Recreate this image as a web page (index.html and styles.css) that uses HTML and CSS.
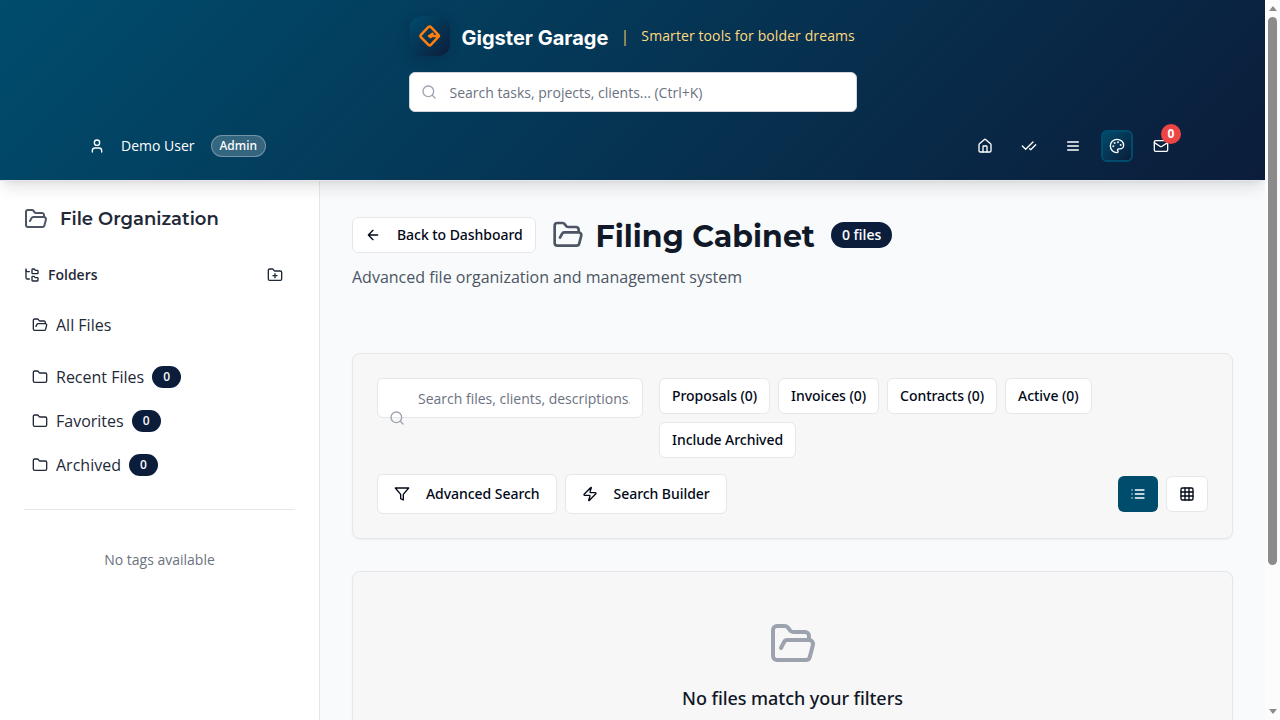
FILE: index.html
```html
<!DOCTYPE html>
<html lang="en">
<head>
<meta charset="utf-8">
<title>Filing Cabinet</title>
<link rel="stylesheet" href="styles.css">
</head>
<body>
<svg width="0" height="0" class="defs">
  <symbol id="folder-open" viewBox="0 0 24 24"><path d="m6 14 1.5-2.9A2 2 0 0 1 9.24 10H20a2 2 0 0 1 1.94 2.5l-1.54 6a2 2 0 0 1-1.95 1.5H4a2 2 0 0 1-2-2V5a2 2 0 0 1 2-2h3.9a2 2 0 0 1 1.69.9l.81 1.2a2 2 0 0 0 1.67.9H18a2 2 0 0 1 2 2v2"/></symbol>
  <symbol id="folder" viewBox="0 0 24 24"><path d="M20 20a2 2 0 0 0 2-2V8a2 2 0 0 0-2-2h-7.9a2 2 0 0 1-1.69-.9L9.6 3.9A2 2 0 0 0 7.93 3H4a2 2 0 0 0-2 2v13a2 2 0 0 0 2 2Z"/></symbol>
  <symbol id="search" viewBox="0 0 24 24"><circle cx="11" cy="11" r="8"/><path d="m21 21-4.3-4.3"/></symbol>
</svg>
<div class="viewport">
<div class="page">
  <header class="header">
    <div class="brand">
      <div class="logo"><svg width="24" height="24" viewBox="0 0 24 24"><path d="M10.5 2.9 2.9 10.8a1.6 1.6 0 0 0 0 2.3l7.6 7.8a1.6 1.6 0 0 0 2.3 0l8-8.5a.7.7 0 0 0 0-1l-8-8.5a1.6 1.6 0 0 0-2.3 0ZM20 12H11M14.5 9.8 11.5 12l1.2 1.2"/></svg></div>
      <span class="brand-name">Gigster Garage</span>
      <span class="brand-bar">|</span>
      <span class="tagline">Smarter tools for bolder dreams</span>
    </div>
    <div class="global-search"><svg class="icon"><use href="#search"/></svg><span>Search tasks, projects, clients... (Ctrl+K)</span></div>
    <div class="header-row">
      <div class="user">
        <svg class="icon" viewBox="0 0 24 24"><path d="M19 21v-2a4 4 0 0 0-4-4H9a4 4 0 0 0-4 4v2"/><circle cx="12" cy="7" r="4"/></svg>
        <span>Demo User</span><span class="admin">Admin</span>
      </div>
      <nav class="nav">
        <span class="nav-item"><svg class="icon" viewBox="0 0 24 24"><path d="M15 21v-8a1 1 0 0 0-1-1h-4a1 1 0 0 0-1 1v8"/><path d="M3 10a2 2 0 0 1 .709-1.528l7-5.999a2 2 0 0 1 2.582 0l7 5.999A2 2 0 0 1 21 10v9a2 2 0 0 1-2 2H5a2 2 0 0 1-2-2z"/></svg></span>
        <span class="nav-item"><svg class="icon" viewBox="0 0 24 24"><path d="M18 6 7 17l-5-5"/><path d="m22 10-7.5 7.5L13 16"/></svg></span>
        <span class="nav-item"><svg class="icon" viewBox="0 0 24 24"><path d="M4 12h16M4 6h16M4 18h16"/></svg></span>
        <span class="nav-item nav-active"><svg class="icon" viewBox="0 0 24 24"><g fill="currentColor"><circle cx="13.5" cy="6.5" r=".5"/><circle cx="17.5" cy="10.5" r=".5"/><circle cx="8.5" cy="7.5" r=".5"/><circle cx="6.5" cy="12.5" r=".5"/></g><path d="M12 2C6.5 2 2 6.5 2 12s4.5 10 10 10c.926 0 1.648-.746 1.648-1.688 0-.437-.18-.835-.437-1.125-.29-.289-.438-.652-.438-1.125a1.64 1.64 0 0 1 1.668-1.668h1.996c3.051 0 5.555-2.503 5.555-5.554C21.965 6.012 17.461 2 12 2z"/></svg></span>
        <span class="nav-item"><svg class="icon" viewBox="0 0 24 24"><rect x="2" y="4" width="20" height="16" rx="2"/><path d="m22 7-8.97 5.7a1.94 1.94 0 0 1-2.06 0L2 7"/></svg><b class="count">0</b></span>
      </nav>
    </div>
  </header>
  <div class="body">
    <aside class="sidebar">
      <h2 class="side-title"><svg class="icon"><use href="#folder-open"/></svg>File Organization</h2>
      <div class="folders-head">
        <svg class="icon" viewBox="0 0 24 24"><path d="M20 10a1 1 0 0 0 1-1V6a1 1 0 0 0-1-1h-2.5a1 1 0 0 1-.8-.4l-.9-1.2A1 1 0 0 0 15 3h-2a1 1 0 0 0-1 1v5a1 1 0 0 0 1 1Z"/><path d="M20 21a1 1 0 0 0 1-1v-3a1 1 0 0 0-1-1h-2.9a1 1 0 0 1-.88-.55l-.42-.85a1 1 0 0 0-.92-.6H13a1 1 0 0 0-1 1v5a1 1 0 0 0 1 1Z"/><path d="M3 5a2 2 0 0 0 2 2h3"/><path d="M3 3v13a2 2 0 0 0 2 2h3"/></svg>
        <span>Folders</span>
        <svg class="icon add" viewBox="0 0 24 24"><path d="M12 10v6M9 13h6"/><path d="M20 20a2 2 0 0 0 2-2V8a2 2 0 0 0-2-2h-7.9a2 2 0 0 1-1.69-.9L9.6 3.9A2 2 0 0 0 7.93 3H4a2 2 0 0 0-2 2v13a2 2 0 0 0 2 2Z"/></svg>
      </div>
      <div class="folder all"><svg class="icon"><use href="#folder-open"/></svg>All Files</div>
      <div class="folder"><svg class="icon"><use href="#folder"/></svg>Recent Files<span class="pill">0</span></div>
      <div class="folder"><svg class="icon"><use href="#folder"/></svg>Favorites<span class="pill">0</span></div>
      <div class="folder"><svg class="icon"><use href="#folder"/></svg>Archived<span class="pill">0</span></div>
      <div class="tags">No tags available</div>
    </aside>
    <main class="main">
      <div class="title-row">
        <button class="btn"><svg class="icon" viewBox="0 0 24 24"><path d="m12 19-7-7 7-7M19 12H5"/></svg>Back to Dashboard</button>
        <svg class="icon title-icon"><use href="#folder-open"/></svg>
        <h1>Filing Cabinet</h1>
        <span class="pill files">0 files</span>
      </div>
      <p class="subtitle">Advanced file organization and management system</p>
      <section class="panel">
        <div class="filters">
          <div class="file-search"><div class="clip">Search files, clients, descriptions...</div><svg class="icon"><use href="#search"/></svg></div>
          <div class="chips">
            <button class="btn">Proposals (0)</button><button class="btn">Invoices (0)</button><button class="btn">Contracts (0)</button><button class="btn">Active (0)</button><button class="btn">Include Archived</button>
          </div>
        </div>
        <div class="tools">
          <button class="btn big"><svg class="icon" viewBox="0 0 24 24"><path d="M22 3H2l8 9.46V19l4 2v-8.54L22 3z"/></svg>Advanced Search</button>
          <button class="btn big"><svg class="icon" viewBox="0 0 24 24"><path d="M4 14a1 1 0 0 1-.78-1.63l9.9-10.2a.5.5 0 0 1 .86.46l-1.92 6.02A1 1 0 0 0 13 10h7a1 1 0 0 1 .78 1.63l-9.9 10.2a.5.5 0 0 1-.86-.46l1.92-6.02A1 1 0 0 0 11 14z"/></svg>Search Builder</button>
          <button class="btn view on"><svg class="icon" viewBox="0 0 24 24"><path d="M3 12h.01M3 18h.01M3 6h.01M8 12h13M8 18h13M8 6h13"/></svg></button>
          <button class="btn view"><svg class="icon" viewBox="0 0 24 24"><rect width="18" height="18" x="3" y="3" rx="2"/><path d="M3 9h18M3 15h18M9 3v18M15 3v18"/></svg></button>
        </div>
      </section>
      <section class="panel empty">
        <svg class="icon"><use href="#folder-open"/></svg>
        <h3>No files match your filters</h3>
      </section>
    </main>
  </div>
</div>
<div class="scrollbar"><i class="up"></i><i class="thumb"></i><i class="down"></i></div>
</div>
</body>
</html>
```
FILE: styles.css
```css
* { box-sizing: border-box; }
body { margin: 0; font: 16px/24px "Open Sans", "Noto Sans", sans-serif; color: #1f2937; }
h1, h2, h3, p { margin: 0; }
.defs { position: absolute; }
.viewport { display: flex; height: 720px; overflow: hidden; }
.page { width: 1265px; height: 720px; overflow: hidden; display: flex; flex-direction: column; background: #f9fafc; }
.icon { width: 16px; height: 16px; flex: none; fill: none; stroke: currentColor; stroke-width: 2; stroke-linecap: round; stroke-linejoin: round; }

.header { position: relative; z-index: 1; flex: none; height: 181px; border-bottom: 1px solid #e5e7eb; padding: 16px 88px 0; display: flex; flex-direction: column; align-items: center; background: linear-gradient(135deg, #004c6d 0%, #0b1d3a 100%); color: #fff; box-shadow: 0 10px 15px -3px rgba(0, 0, 0, .1), 0 4px 6px -4px rgba(0, 0, 0, .1); }
.brand { display: flex; align-items: center; width: 446px; height: 40px; white-space: nowrap; }
.logo { flex: none; width: 40px; height: 40px; border-radius: 12px; display: flex; justify-content: center; padding-top: 8px; background: linear-gradient(135deg, #004c6d, #0b1d3a); box-shadow: 0 4px 12px rgba(11, 29, 58, .3); }
.logo svg { fill: none; stroke: #ff7f0e; stroke-width: 2.5; stroke-linecap: round; stroke-linejoin: round; }
.brand-name { margin: 4px 0 0 12px; font: 700 20px/28px Inter, sans-serif; }
.brand-bar { width: 9px; text-align: center; margin-left: 12px; color: #ffd166; opacity: .85; }
.tagline { margin-left: 12px; font: 500 14px/20px "Open Sans", "Noto Sans", sans-serif; letter-spacing: .1px; color: #ffd980; }
.global-search { margin-top: 16px; width: 448px; height: 40px; flex: none; display: flex; align-items: center; gap: 13px; padding: 0 11px; background: #fff; border: 1px solid #d1d5db; border-radius: 6px; font-size: 14px; color: #6b7280; }
.global-search span { padding-top: 2px; }
.global-search .icon { color: #9ca3af; }
.header-row { margin-top: 18px; width: 100%; display: flex; justify-content: space-between; align-items: center; }
.user { display: flex; align-items: center; font-size: 14px; }
.user .icon { margin: 0 16px 0 1px; }
.admin { margin-left: 16px; padding: 0 8px; height: 22px; border: 1px solid rgba(255, 255, 255, .3); background: rgba(255, 255, 255, .2); border-radius: 11px; font: 500 12px/20px "Noto Sans", sans-serif; }
.nav { display: flex; gap: 12px; }
.nav-item { position: relative; width: 32px; height: 32px; display: flex; align-items: center; justify-content: center; }
.nav-active { border: 2px solid #004c6d; border-radius: 6px; background: linear-gradient(135deg, #004c6d, #0b1d3a); }
.count { position: absolute; top: -6px; right: -4px; width: 20px; height: 20px; line-height: 20px; text-align: center; font-size: 12px; border-radius: 50%; background: #ef4444; }

.body { flex: 1; display: flex; min-height: 0; }
.sidebar { width: 320px; flex: none; padding: 24px; background: #fff; border-right: 1px solid #e5e7eb; }
.side-title { display: flex; align-items: center; gap: 12px; font: 600 18px/28px Montserrat, sans-serif; }
.side-title .icon { width: 24px; height: 24px; color: #4b5563; }
.folders-head { display: flex; align-items: center; gap: 8px; height: 36px; margin-top: 24px; padding-right: 12px; font-size: 14px; font-weight: 600; }
.add { margin-left: auto; }
.folder { display: flex; align-items: center; gap: 8px; height: 40px; padding: 0 8px; margin-bottom: 4px; }
.all { margin: 12px 0; }
.pill { height: 22px; padding: 0 11px; border-radius: 13px; background: #0b1d3a; color: #f9fafc; font-size: 12px; line-height: 22px; font-weight: 600; }
.tags { margin-top: 24px; border-top: 1px solid #e5e7eb; padding-top: 38px; text-align: center; font-size: 14px; color: #6b7280; }

.main { flex: 1; padding: 35px 32px 0; }
.title-row { display: flex; align-items: center; height: 38px; }
.btn { height: 36px; padding: 0 12px; border: 1px solid #e5e7eb; border-radius: 6px; background: #fff; color: #020817; font: 500 14px/20px "Noto Sans", sans-serif; letter-spacing: -.05px; display: inline-flex; align-items: center; gap: 16px; white-space: nowrap; }
.title-icon { width: 32px; height: 32px; margin: 0 12px 0 16px; color: #4b5563; }
.title-row h1 { padding-top: 3px; font: 700 30px/36px Montserrat, sans-serif; color: #111827; white-space: nowrap; }
.files { margin-left: 16px; height: 26px; line-height: 26px; font-size: 14px; }
.subtitle { margin-top: 11px; color: #4b5563; }
.panel { margin-top: 64px; padding: 24px; border: 1px solid #e5e7eb; border-radius: 8px; background: #f7f7f7; box-shadow: 0 1px 2px rgba(0, 0, 0, .05); }
.filters { display: flex; gap: 16px; align-items: flex-start; }
.file-search { position: relative; width: 266px; height: 40px; flex: none; padding: 0 12px 0 40px; border: 1px solid #e5e7eb; border-radius: 6px; background: #fff; font-size: 14px; line-height: 40px; color: #6b7280; }
.clip { overflow: hidden; white-space: nowrap; }
.file-search .icon { position: absolute; left: 11px; bottom: -9px; color: #9ca3af; }
.chips { display: flex; flex-wrap: wrap; gap: 8px; width: 480px; }
.tools { display: flex; align-items: center; gap: 8px; margin-top: 16px; }
.big { height: 40px; padding: 0 16px; }
.view { justify-content: center; padding: 0; width: 42px; }
.on { margin-left: auto; width: 40px; border: 0; background: #004c6d; color: #fff; }
.empty { margin-top: 32px; height: 334px; padding-top: 48px; text-align: center; }
.empty .icon { display: block; width: 48px; height: 48px; margin: 0 auto 16px; color: #9ca3af; }
.empty h3 { font: 500 18px/28px "Noto Sans", sans-serif; letter-spacing: -.06px; color: #111827; }

.scrollbar { width: 15px; height: 720px; display: flex; flex-direction: column; align-items: center; background: #fcfcfc; }
.up { margin-top: 6px; border: 4px solid transparent; border-top: 0; border-bottom: 5px solid #8b8b8b; }
.thumb { margin-top: 6px; width: 9px; height: 548px; border-radius: 5px; background: #8b8b8b; }
.down { margin: auto 0 6px; border: 4px solid transparent; border-bottom: 0; border-top: 5px solid #8b8b8b; }
```
